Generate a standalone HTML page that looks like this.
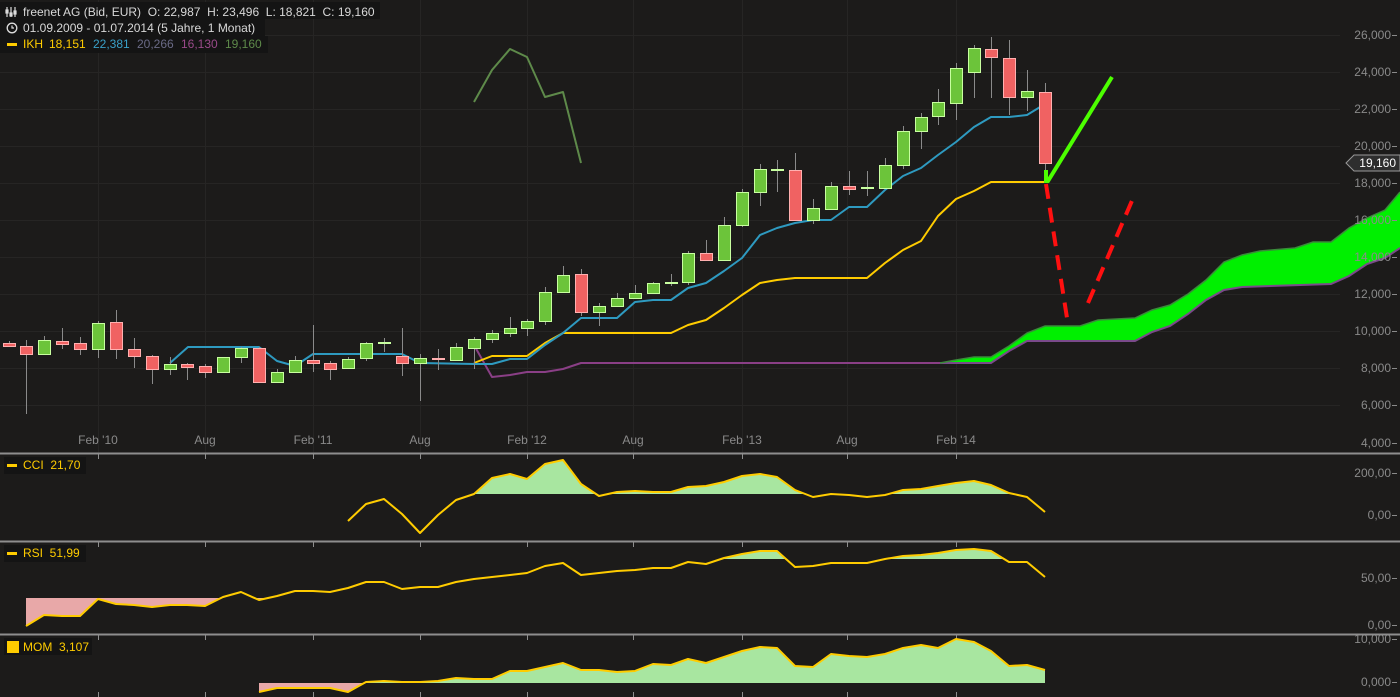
<!DOCTYPE html>
<html><head><meta charset="utf-8"><style>
html,body{margin:0;padding:0;background:#1c1b1a;width:1400px;height:697px;overflow:hidden}
svg{display:block;font-family:"Liberation Sans",sans-serif}
text{white-space:pre}
</style></head><body>
<svg id="s" width="1400" height="697" viewBox="0 0 1400 697" xmlns="http://www.w3.org/2000/svg">
<rect width="1400" height="697" fill="#1c1b1a"/>
<g id="grid" stroke="#262524" stroke-width="1"></g>
<g id="cloud"></g>
<g id="lines" fill="none" stroke-width="2" stroke-linejoin="round"></g>
<g id="candles"></g>
<g id="ann" fill="none" stroke-linecap="butt"></g>
<g id="ind" stroke-linejoin="round"></g>
<g id="axis" fill="#8a8a8a" font-size="12" text-anchor="end"></g>
<g fill="#8a8a8a" font-size="12" text-anchor="middle">
<text x="98" y="444">Feb '10</text><text x="205" y="444">Aug</text><text x="313" y="444">Feb '11</text><text x="420" y="444">Aug</text><text x="527" y="444">Feb '12</text><text x="633" y="444">Aug</text><text x="742" y="444">Feb '13</text><text x="847" y="444">Aug</text><text x="956" y="444">Feb '14</text>
</g>
<g stroke="#8e8e8e" stroke-width="2"><line x1="0" y1="453.5" x2="1400" y2="453.5"/><line x1="0" y1="541.5" x2="1400" y2="541.5"/><line x1="0" y1="634.5" x2="1400" y2="634.5"/></g>
<path d="M1346 163 L1354 155 L1400 155 L1400 171 L1354 171 Z" fill="#2e2e2e" stroke="#9a9a9a" stroke-width="1"/>
<text x="1396" y="167" fill="#fff" font-size="12" text-anchor="end">19,160</text>
<rect x="0" y="2" width="380" height="17" fill="#141414"/>
<rect x="0" y="19" width="265" height="17" fill="#141414"/>
<rect x="0" y="36" width="268" height="17" fill="#141414"/>
<g font-size="12">
<g stroke="#ddd" stroke-width="1.2" fill="none"><line x1="7" y1="7" x2="7" y2="17"/><line x1="11" y1="7" x2="11" y2="17"/><line x1="15" y1="7" x2="15" y2="17"/><rect x="6" y="10" width="2" height="3"/><rect x="10" y="13" width="2" height="3"/><rect x="14" y="11" width="2" height="3"/></g>
<text x="23" y="16" fill="#d8d8d8">freenet AG (Bid, EUR)  O: 22,987  H: 23,496  L: 18,821  C: 19,160</text>
<circle cx="12" cy="28" r="4.8" fill="none" stroke="#ddd" stroke-width="1.3"/><path d="M12 25.5 V28 H14" stroke="#ddd" stroke-width="1.2" fill="none"/>
<text x="23" y="32" fill="#d8d8d8">01.09.2009 - 01.07.2014 (5 Jahre, 1 Monat)</text>
<rect x="7" y="43" width="10" height="3" fill="#ffcc00"/>
<text x="23" y="48" fill="#ffcc00">IKH</text><text x="49" y="48" fill="#ffcc00">18,151</text><text x="93" y="48" fill="#3aa0c8">22,381</text><text x="137" y="48" fill="#6a6a86">20,266</text><text x="181" y="48" fill="#9a4a8a">16,130</text><text x="225" y="48" fill="#5e8a4a">19,160</text>
<rect x="4" y="457" width="82" height="17" fill="#141414"/>
<rect x="7" y="464" width="10" height="3" fill="#ffcc00"/><text x="23" y="469" fill="#ffcc00">CCI  21,70</text>
<rect x="4" y="545" width="82" height="17" fill="#141414"/>
<rect x="7" y="552" width="10" height="3" fill="#ffcc00"/><text x="23" y="557" fill="#ffcc00">RSI  51,99</text>
<rect x="4" y="638" width="88" height="17" fill="#141414"/>
<rect x="7" y="641" width="12" height="12" fill="#ffcc00"/><text x="23" y="651" fill="#ffcc00">MOM  3,107</text>
</g>
</svg>
<script>
var NS="http://www.w3.org/2000/svg";
function el(p,t,a){var e=document.createElementNS(NS,t);for(var k in a)e.setAttribute(k,a[k]);document.getElementById(p).appendChild(e);return e;}
function pts(a){return a.map(function(p){return p[0]+","+p[1]}).join(" ");}
[35,72,109,146,183,220,257,294,331,368,405].forEach(function(y){el("grid","line",{x1:0,y1:y+.5,x2:1340,y2:y+.5});});
[98,205,313,420,527,633,742,847,956].forEach(function(x){el("grid","line",{x1:x+.5,y1:0,x2:x+.5,y2:453});
 ["453","541","634"].forEach(function(y){el("grid","line",{x1:x+.5,y1:+y+1,x2:x+.5,y2:+y+6,stroke:"#8e8e8e"});});
 el("grid","line",{x1:x+.5,y1:692,x2:x+.5,y2:697,stroke:"#8e8e8e"});});
var lv=[["26,000",35],["24,000",72],["22,000",109],["20,000",146],["18,000",183],["16,000",220],["14,000",257],["12,000",294],["10,000",331],["8,000",368],["6,000",405],["4,000",443],
["200,00",473],["0,00",515],["50,00",578],["0,00",625],["10,000",639],["0,000",682]];
lv.forEach(function(l){var t=el("axis","text",{x:1391,y:l[1]+4});t.textContent=l[0];el("axis","rect",{x:1392,y:l[1],width:5,height:1});});
var up=[[940,363],[956,360],[974,357],[991,357],[1009,346],[1027,333],[1045,326],[1080,326],[1098,320],[1135,318],[1152,310],[1170,305],[1188,294],[1206,280],[1224,262],[1242,255],[1260,251],[1295,248],[1313,242],[1331,242],[1349,228],[1367,218],[1385,210],[1400,192]];
var lo=[[940,363],[991,363],[1009,351],[1027,341],[1135,341],[1152,332],[1170,326],[1188,314],[1206,300],[1224,290],[1242,287],[1331,284],[1349,276],[1367,264],[1385,258],[1400,248]];
el("cloud","polygon",{points:pts(up.concat(lo.slice().reverse())),fill:"#00f000"});
el("cloud","polyline",{points:pts(lo),fill:"none",stroke:"#7a4a8a","stroke-width":2});
el("cloud","polyline",{points:pts(up),fill:"none",stroke:"#3a8a3a","stroke-width":1.5});
el("lines","polyline",{stroke:"#8a3f86",points:pts([[474,345],[492,377],[510,375],[527,372],[545,372],[563,369],[581,363],[940,363]])});
el("lines","polyline",{stroke:"#ffcc00",points:pts([[474,363],[492,356],[527,356],[545,343],[563,333],[671,333],[688,325],[706,320],[724,308],[742,295],[760,283],[777,280],[795,278],[867,278],[885,263],[903,250],[921,241],[938,216],[956,199],[974,191],[991,182],[1045,182]])});
el("lines","polyline",{stroke:"#2e9ac0",points:pts([[170,363],[188,347],[259,347],[277,361],[295,366],[313,354],[402,354],[420,363],[474,364],[492,364],[510,359],[527,359],[545,345],[563,333],[581,318],[617,318],[635,302],[653,300],[671,300],[688,288],[706,283],[724,271],[742,258],[760,235],[777,228],[795,223],[813,220],[831,220],[849,207],[867,207],[885,190],[903,176],[921,168],[938,155],[956,142],[974,127],[991,117],[1009,117],[1027,115],[1045,104]])});
el("lines","polyline",{stroke:"#5e8a4a",points:pts([[474,102],[492,70],[510,49],[527,57],[545,97],[563,92],[581,163]])});
var C=[[8.5,343,346,341,347,0],[26,346,354,340,414,0],[44,340,354,336,355,1],[62,341,344,328,349,0],[80,343,349,337,355,0],[98,323,349,321,358,1],[116,322,349,310,359,0],[134,349,356,338,368,0],[152,356,369,355,384,0],[170,364,369,357,375,1],[187,364,367,363,380,0],[205,366,372,364,378,0],[223,357,372,357,372,1],[241,348,357,347,363,1],[259,348,382,347,383,0],[277,372,382,369,383,1],[295,360,372,356,373,1],[313,360,363,325,372,0],[330,363,369,361,380,0],[348,359,368,357,369,1],[366,343,358,342,361,1],[384,342,343,338,352,1],[402,356,363,328,376,0],[420,358,363,354,401,1],[438,358,359,349,370,0],[456,347,360,343,361,1],[474,339,348,337,369,1],[492,333,339,330,343,1],[510,328,333,317,337,1],[527,321,328,319,336,1],[545,292,321,287,325,1],[563,275,292,266,293,1],[581,274,312,269,316,0],[599,306,312,303,326,1],[617,298,306,293,306,1],[635,293,298,285,299,1],[653,283,293,282,293,1],[671,282,283,274,286,1],[688,253,282,251,285,1],[706,253,260,240,260,0],[724,225,260,217,260,1],[742,192,225,189,227,1],[760,169,192,164,206,1],[777,169,170,160,192,1],[795,170,220,153,220,0],[813,208,220,199,224,1],[831,186,209,182,209,1],[849,186,189,171,195,0],[867,187,188,171,196,1],[885,165,188,158,188,1],[903,131,165,126,169,1],[921,117,131,113,149,1],[938,102,116,89,125,1],[956,68,103,63,120,1],[974,48,72,45,98,1],[991,49,57,37,98,0],[1009,58,97,40,115,0],[1027,91,97,70,111,1],[1045,92,163,83,175,0]];
C.forEach(function(c){var x=Math.round(c[0]);
 el("candles","line",{x1:x+.5,y1:c[3],x2:x+.5,y2:c[4],stroke:"#8a8a8a","stroke-width":1});
 el("candles","rect",{x:x-5.5,y:c[1]+.5,width:12,height:Math.max(1,c[2]-c[1]),fill:c[5]?"#6cc43a":"#f06262",stroke:c[5]?"#c8ffa0":"#ffb0b0","stroke-width":1});});
el("ann","polyline",{points:"1046,170 1046,181 1048,181 1112,77",stroke:"#4cff00","stroke-width":4});
el("ann","line",{x1:1046,y1:184,x2:1067,y2:318,stroke:"#ff1010","stroke-width":4,"stroke-dasharray":"15,9"});
el("ann","line",{x1:1088,y1:303,x2:1134,y2:196,stroke:"#ff1010","stroke-width":4,"stroke-dasharray":"15,9"});
function ind(line,base,gAbove,gBelow){
 var x0=line[0][0],x1=line[line.length-1][0];
 if(gAbove){var cid="ca"+base;var cp=el("ind","clipPath",{id:cid});var r=document.createElementNS(NS,"rect");r.setAttribute("x",0);r.setAttribute("y",0);r.setAttribute("width",1400);r.setAttribute("height",gAbove);cp.appendChild(r);
  el("ind","polygon",{points:pts([[x0,gAbove]].concat(line).concat([[x1,gAbove]])),fill:"#a8e6a0","clip-path":"url(#"+cid+")"});}
 if(gBelow){var cid2="cb"+base;var cp2=el("ind","clipPath",{id:cid2});var r2=document.createElementNS(NS,"rect");r2.setAttribute("x",0);r2.setAttribute("y",gBelow);r2.setAttribute("width",1400);r2.setAttribute("height",200);cp2.appendChild(r2);
  el("ind","polygon",{points:pts([[x0,gBelow]].concat(line).concat([[x1,gBelow]])),fill:"#e8a8a8","clip-path":"url(#"+cid2+")"});}
 el("ind","polyline",{points:pts(line),fill:"none",stroke:"#ffcc00","stroke-width":2});
}
ind([[348,521],[366,504],[384,499],[402,514],[420,533],[438,515],[456,500],[474,494],[492,478],[510,474],[527,479],[545,464],[563,460],[581,484],[599,496],[617,492],[635,491],[653,492],[671,492],[688,487],[706,486],[724,482],[742,476],[760,474],[777,477],[795,490],[813,497],[831,494],[849,495],[867,497],[885,495],[903,490],[921,489],[938,486],[956,483],[974,481],[991,485],[1009,493],[1027,497],[1045,512]],1,494,0);
ind([[26,626],[44,615],[62,616],[80,616],[98,599],[116,604],[134,605],[152,607],[170,605],[187,605],[205,606],[223,597],[241,592],[259,600],[277,596],[295,591],[313,591],[330,592],[348,588],[366,582],[384,582],[402,589],[420,587],[438,587],[456,582],[474,579],[492,577],[510,575],[527,573],[545,566],[563,563],[581,575],[599,573],[617,571],[635,570],[653,568],[671,568],[688,562],[706,564],[724,558],[742,554],[760,551],[777,551],[795,567],[813,566],[831,563],[849,563],[867,563],[885,559],[903,556],[921,555],[938,553],[956,550],[974,549],[991,551],[1009,562],[1027,562],[1045,577]],2,559,598);
ind([[259,692],[277,688],[295,688],[313,688],[330,688],[348,692],[366,682],[384,681],[402,682],[420,682],[438,681],[456,678],[474,679],[492,679],[510,671],[527,671],[545,667],[563,663],[581,670],[599,670],[617,672],[635,671],[653,664],[671,665],[688,659],[706,663],[724,657],[742,651],[760,647],[777,648],[795,666],[813,667],[831,654],[849,656],[867,657],[885,654],[903,648],[921,645],[938,648],[956,639],[974,642],[991,651],[1009,666],[1027,665],[1045,670]],3,683,683);
</script>
</body></html>
